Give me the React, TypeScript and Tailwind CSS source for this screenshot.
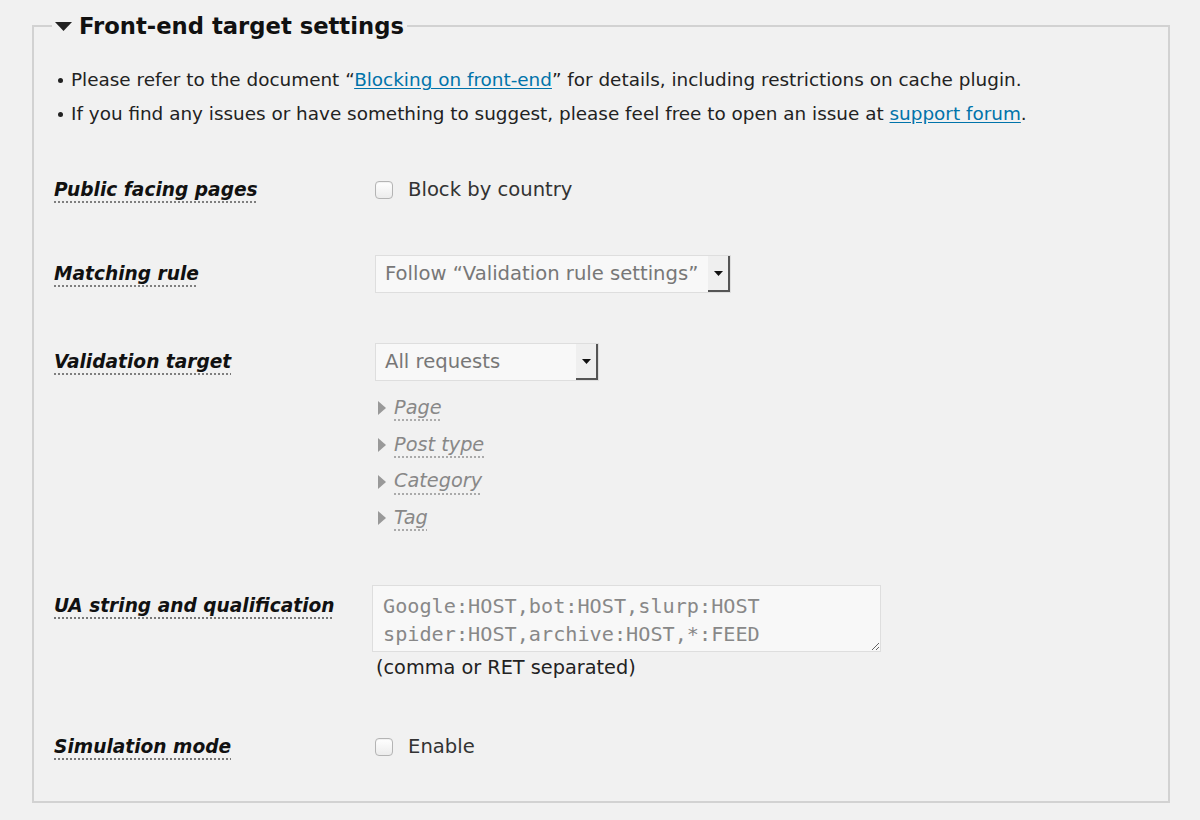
import React from 'react';

const sans = { fontFamily: '"DejaVu Sans", Verdana, sans-serif' };
const mono = { fontFamily: '"DejaVu Sans Mono", "Liberation Mono", monospace' };

function Label({ children, offset = '' }: { children: React.ReactNode; offset?: string }) {
  return (
    <div className={`w-[321px] shrink-0 leading-[38px] ${offset}`}>
      <span className="text-[18.6px] font-bold italic text-[#111] underline decoration-dotted decoration-[#777] underline-offset-[6px]">
        {children}
      </span>
    </div>
  );
}

function Checkbox() {
  return (
    <span className="inline-block h-[18px] w-[18px] rounded-[4px] border border-[#b4b4b4] bg-gradient-to-b from-white to-[#ececec] shadow-[inset_0_1px_1px_rgba(0,0,0,0.06)]" />
  );
}

function Select({ text, width }: { text: string; width: string }) {
  return (
    <div className={`flex h-[38px] ${width} items-stretch border border-[#dedede] bg-[#f8f8f8]`}>
      <div className="flex flex-1 items-center whitespace-nowrap pl-[9px] text-[19.6px] text-[#777]">{text}</div>
      <div className="flex w-[22px] shrink-0 items-center justify-center border-r-2 border-b-2 border-[#555] bg-[#efefef]">
        <svg width="9" height="5" viewBox="0 0 9 5">
          <path d="M0 0h9L4.5 5z" fill="#111" />
        </svg>
      </div>
    </div>
  );
}

function SubItem({ text }: { text: string }) {
  return (
    <div className="flex h-[36.7px] items-center">
      <svg width="8" height="14" viewBox="0 0 8 14" className="ml-[3px] mr-[8px]">
        <path d="M0 0l8 7-8 7z" fill="#999" />
      </svg>
      <span className="text-[19.3px] italic text-[#888] underline decoration-dotted decoration-[#aaa] underline-offset-[6px]">
        {text}
      </span>
    </div>
  );
}

export default function App() {
  return (
    <div className="min-h-[820px] bg-[#f1f1f1] pt-[8px] text-[#222]" style={sans}>
      <fieldset className="ml-[32px] w-[1138px] border-2 border-[#d2d2d2] px-[18px] pt-[18px] pb-[34px]">
        <legend className="px-[3px] leading-[36px]">
          <span className="flex items-center">
            <svg width="17" height="9" viewBox="0 0 17 9" className="mr-[7px]">
              <path d="M0 0h17L8.5 9z" fill="#222" />
            </svg>
            <span className="text-[22.7px] font-bold text-[#111]">Front-end target settings</span>
          </span>
        </legend>

        <div className="pl-[2px]">
          <ul className="text-[18.4px] leading-[34px] text-[#222]">
            <li className="mt-[1px] flex items-center">
              <span className="ml-[4px] mr-[8px] h-[5px] w-[5px] shrink-0 rounded-full bg-[#222]" />
              <span className="whitespace-nowrap">
                Please refer to the document “
                <a className="text-[#0073aa] underline underline-offset-2">Blocking on front-end</a>” for details,
                including restrictions on cache plugin.
              </span>
            </li>
            <li className="flex items-center">
              <span className="ml-[4px] mr-[8px] h-[5px] w-[5px] shrink-0 rounded-full bg-[#222]" />
              <span className="whitespace-nowrap">
                If you find any issues or have something to suggest, please feel free to open an issue at{' '}
                <a className="text-[#0073aa] underline underline-offset-2">support forum</a>.
              </span>
            </li>
          </ul>

          <div className="mt-[40px] flex items-start">
            <Label>Public facing pages</Label>
            <div className="flex h-[38px] items-center">
              <Checkbox />
              <span className="ml-[15px] text-[19.6px] text-[#333]">Block by country</span>
            </div>
          </div>

          <div className="mt-[45px] flex items-start">
            <Label>Matching rule</Label>
            <Select text="Follow “Validation rule settings”" width="w-[356px]" />
          </div>

          <div className="mt-[49px] flex items-start">
            <Label>Validation target</Label>
            <div className="flex flex-col">
              <Select text="All requests" width="w-[224px]" />
              <div className="mt-[9px] flex flex-col">
                <SubItem text="Page" />
                <SubItem text="Post type" />
                <SubItem text="Category" />
                <SubItem text="Tag" />
              </div>
            </div>
          </div>

          <div className="mt-[48px] flex items-start">
            <Label offset="pt-[2px]">UA string and qualification</Label>
            <div className="-ml-[3px] flex flex-col">
              <textarea
                readOnly
                rows={2}
                defaultValue={'Google:HOST,bot:HOST,slurp:HOST\nspider:HOST,archive:HOST,*:FEED'}
                className="h-[67px] w-[509px] resize border border-[#dedede] bg-[#f8f8f8] px-[10px] pt-[6px] text-[20.2px] leading-[28px] text-[#888] outline-none"
                style={mono}
              />
              <div className="mt-[4px] pl-[4px] text-[19.3px] leading-[24px] text-[#222]">(comma or RET separated)</div>
            </div>
          </div>

          <div className="mt-[48px] flex items-start">
            <Label>Simulation mode</Label>
            <div className="flex h-[38px] items-center">
              <Checkbox />
              <span className="ml-[15px] text-[19.6px] text-[#333]">Enable</span>
            </div>
          </div>
        </div>
      </fieldset>
    </div>
  );
}
